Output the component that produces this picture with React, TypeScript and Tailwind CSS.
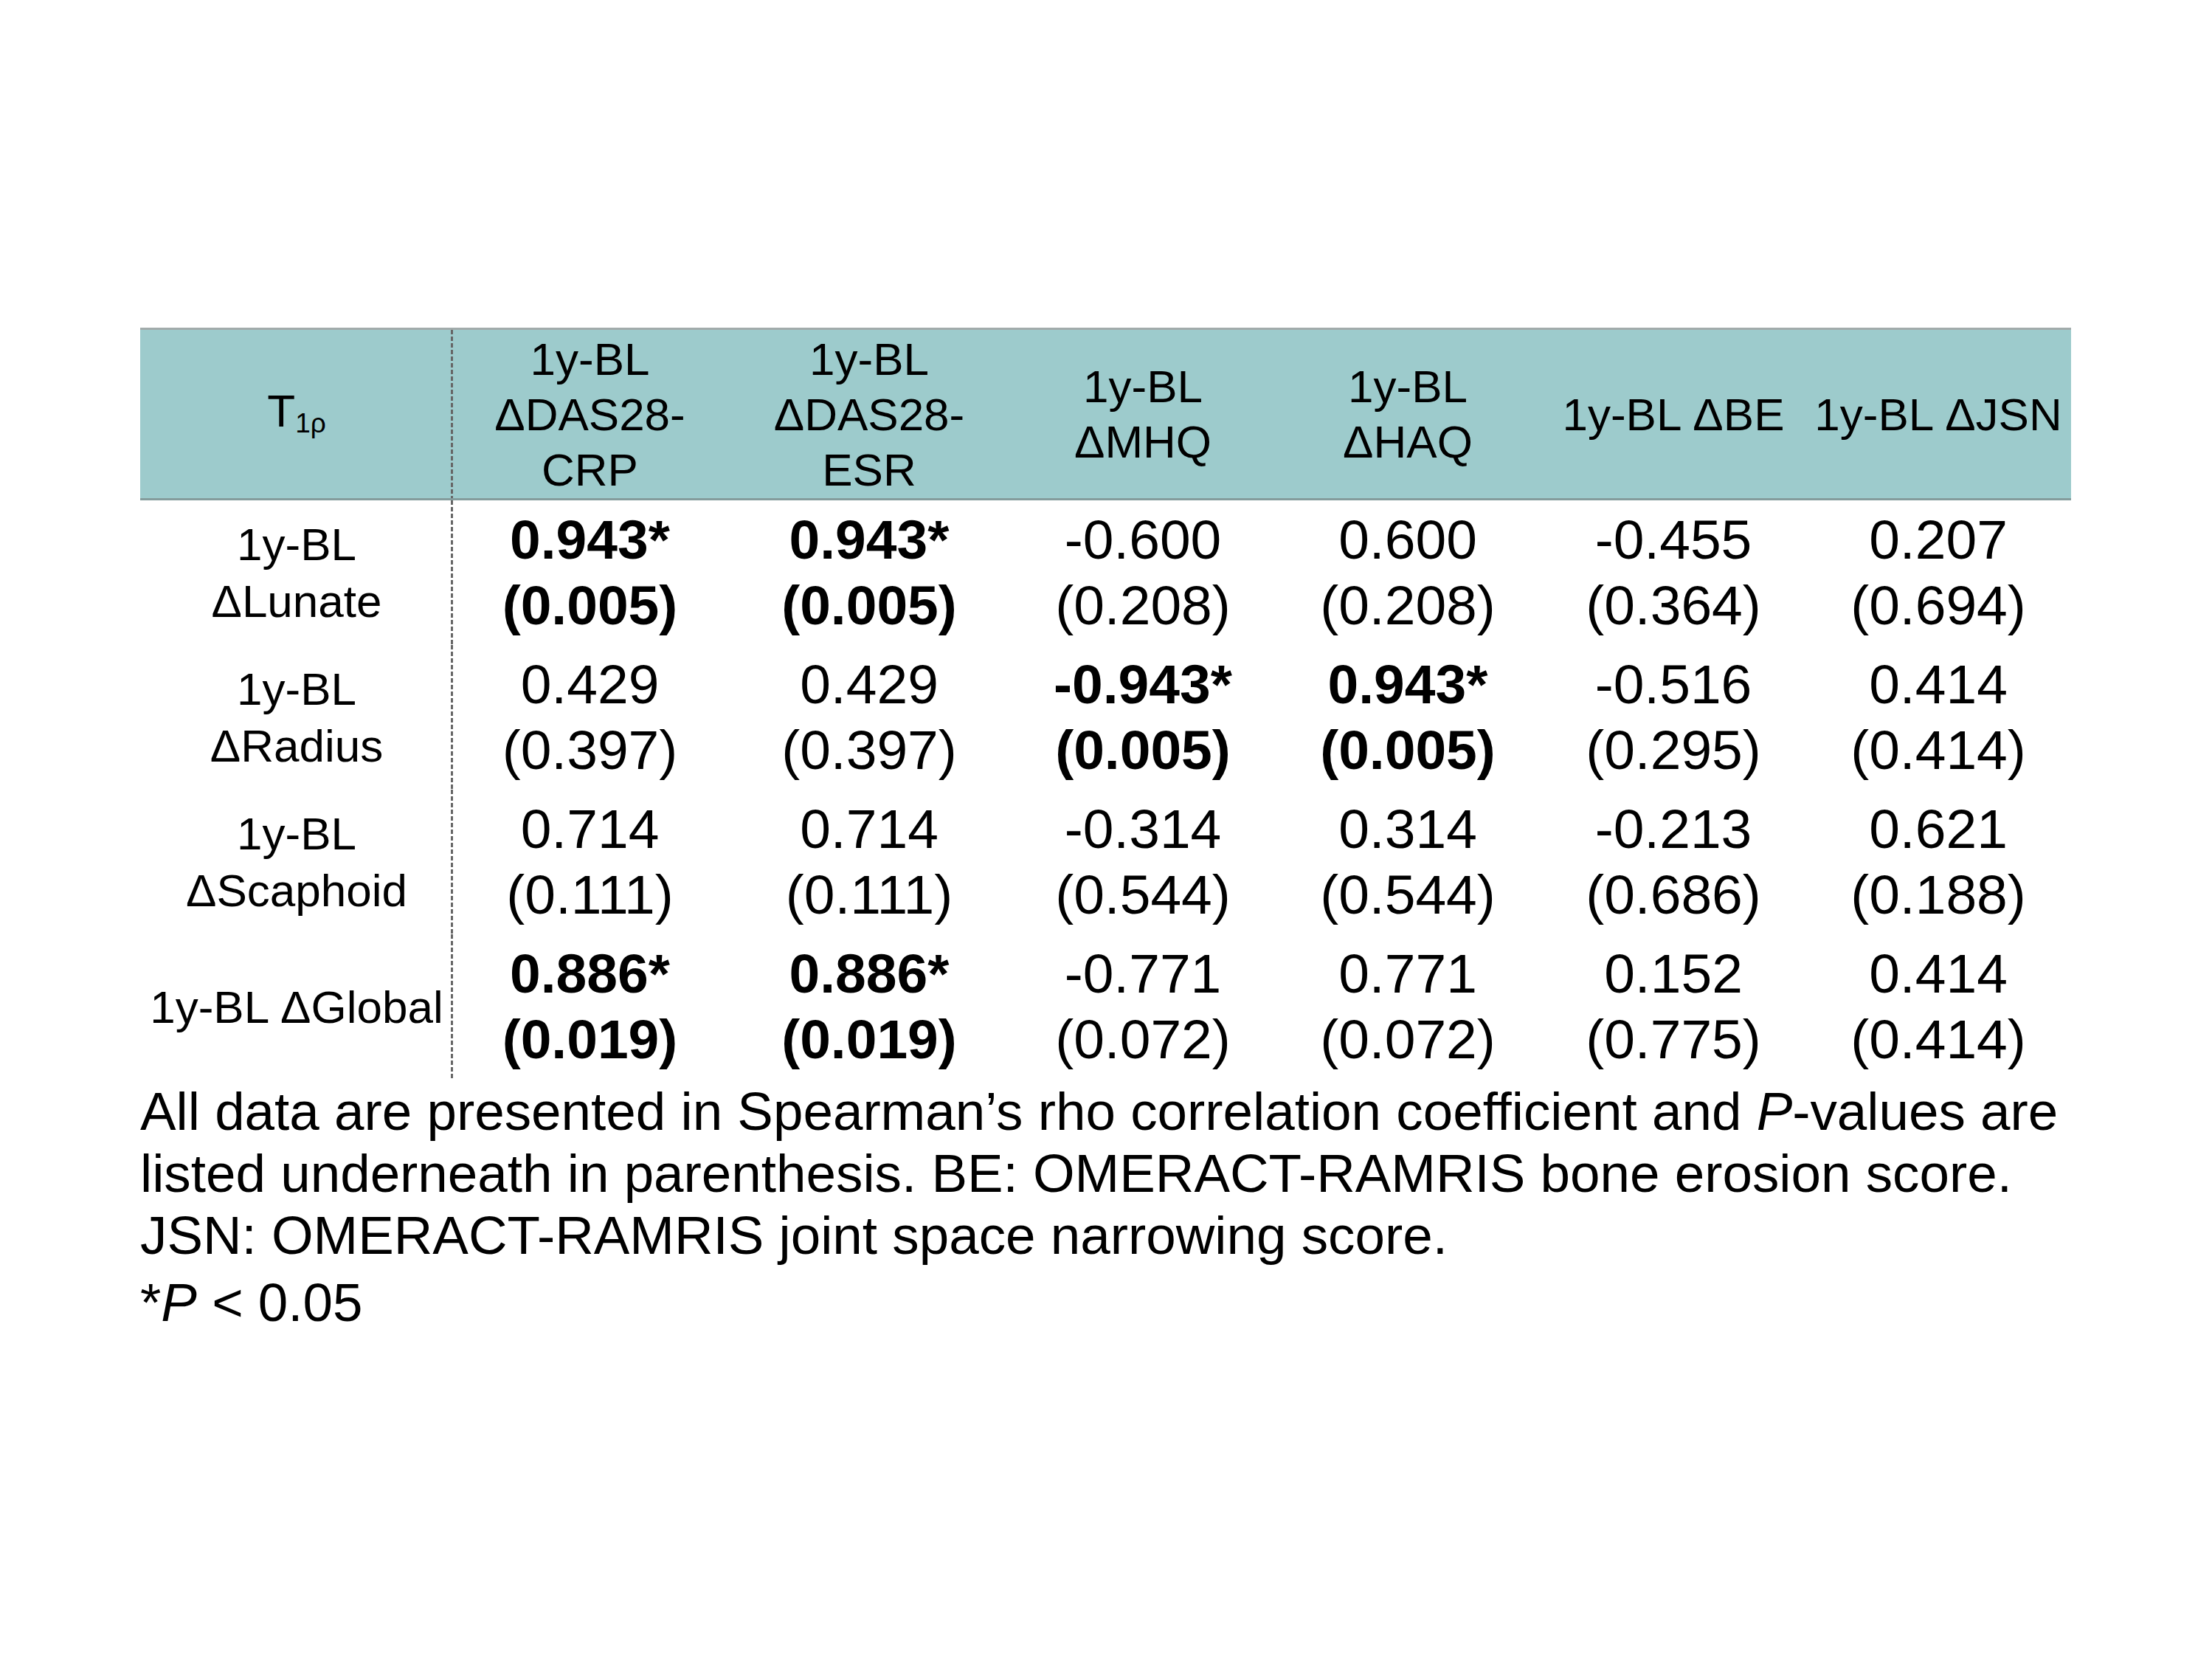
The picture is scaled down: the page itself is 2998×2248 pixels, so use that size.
import React from "react";

type Cell = { v: string; p: string; b?: boolean };

const rows: { label: React.ReactNode; cells: Cell[] }[] = [
  {
    label: (
      <>
        1y-BL
        <br />
        ΔLunate
      </>
    ),
    cells: [
      { v: "0.943*", p: "(0.005)", b: true },
      { v: "0.943*", p: "(0.005)", b: true },
      { v: "-0.600", p: "(0.208)" },
      { v: "0.600", p: "(0.208)" },
      { v: "-0.455", p: "(0.364)" },
      { v: "0.207", p: "(0.694)" },
    ],
  },
  {
    label: (
      <>
        1y-BL
        <br />
        ΔRadius
      </>
    ),
    cells: [
      { v: "0.429", p: "(0.397)" },
      { v: "0.429", p: "(0.397)" },
      { v: "-0.943*", p: "(0.005)", b: true },
      { v: "0.943*", p: "(0.005)", b: true },
      { v: "-0.516", p: "(0.295)" },
      { v: "0.414", p: "(0.414)" },
    ],
  },
  {
    label: (
      <>
        1y-BL
        <br />
        ΔScaphoid
      </>
    ),
    cells: [
      { v: "0.714", p: "(0.111)" },
      { v: "0.714", p: "(0.111)" },
      { v: "-0.314", p: "(0.544)" },
      { v: "0.314", p: "(0.544)" },
      { v: "-0.213", p: "(0.686)" },
      { v: "0.621", p: "(0.188)" },
    ],
  },
  {
    label: <span className="whitespace-nowrap">1y-BL ΔGlobal</span>,
    cells: [
      { v: "0.886*", p: "(0.019)", b: true },
      { v: "0.886*", p: "(0.019)", b: true },
      { v: "-0.771", p: "(0.072)" },
      { v: "0.771", p: "(0.072)" },
      { v: "0.152", p: "(0.775)" },
      { v: "0.414", p: "(0.414)" },
    ],
  },
];

const dashed =
  "bg-[linear-gradient(to_bottom,#666666_6px,transparent_6px)] bg-[length:3px_9px] bg-repeat-y bg-[position:right_top]";

const gridCols = "grid grid-cols-[424px_371px_386px_356px_362px_358px_360px]";

export default function App() {
  return (
    <div className="w-[2998px] h-[2248px] bg-white pt-[444px] pl-[190px] font-['Liberation_Sans',Arial,sans-serif] text-black">
      <div className="w-[2617px]">
        {/* Header */}
        <div
          className={`${gridCols} h-[234px] bg-[#9dcbcc] border-t-[3px] border-t-[#a2abab] border-b-[3px] border-b-[#849c9c] text-[62px] leading-[75px] text-center`}
        >
          <div className={`flex items-center justify-center ${dashed}`}>
            <span>
              T
              <span className="text-[37px] relative top-[8px]">1ρ</span>
            </span>
          </div>
          <div className="flex items-center justify-center">
            <span>
              1y-BL
              <br />
              ΔDAS28-
              <br />
              CRP
            </span>
          </div>
          <div className="flex items-center justify-center">
            <span>
              1y-BL
              <br />
              ΔDAS28-
              <br />
              ESR
            </span>
          </div>
          <div className="flex items-center justify-center">
            <span>
              1y-BL
              <br />
              ΔMHQ
            </span>
          </div>
          <div className="flex items-center justify-center">
            <span>
              1y-BL
              <br />
              ΔHAQ
            </span>
          </div>
          <div className="flex items-center justify-center whitespace-nowrap">1y-BL ΔBE</div>
          <div className="flex items-center justify-center whitespace-nowrap">1y-BL ΔJSN</div>
        </div>

        {/* Body */}
        {rows.map((r, i) => (
          <div key={i} className={`${gridCols} h-[196px]`}>
            <div
              className={`flex items-center justify-center text-center text-[62px] leading-[77px] ${dashed}`}
            >
              <span>{r.label}</span>
            </div>
            {r.cells.map((c, j) => (
              <div
                key={j}
                className={`flex flex-col items-center justify-center text-center text-[75px] leading-[89px] whitespace-nowrap ${
                  c.b ? "font-bold" : ""
                }`}
              >
                <span>{c.v}</span>
                <span>{c.p}</span>
              </div>
            ))}
          </div>
        ))}
      </div>

      {/* Footnote */}
      <div className="mt-[2px] text-[72.8px] leading-[84px] whitespace-nowrap">
        <p>
          All data are presented in Spearman’s rho correlation coefficient and <i>P</i>-values are
          <br />
          listed underneath in parenthesis. BE: OMERACT-RAMRIS bone erosion score.
          <br />
          JSN: OMERACT-RAMRIS joint space narrowing score.
        </p>
        <p className="mt-[7px]">
          *<i>P</i> &lt; 0.05
        </p>
      </div>
    </div>
  );
}
